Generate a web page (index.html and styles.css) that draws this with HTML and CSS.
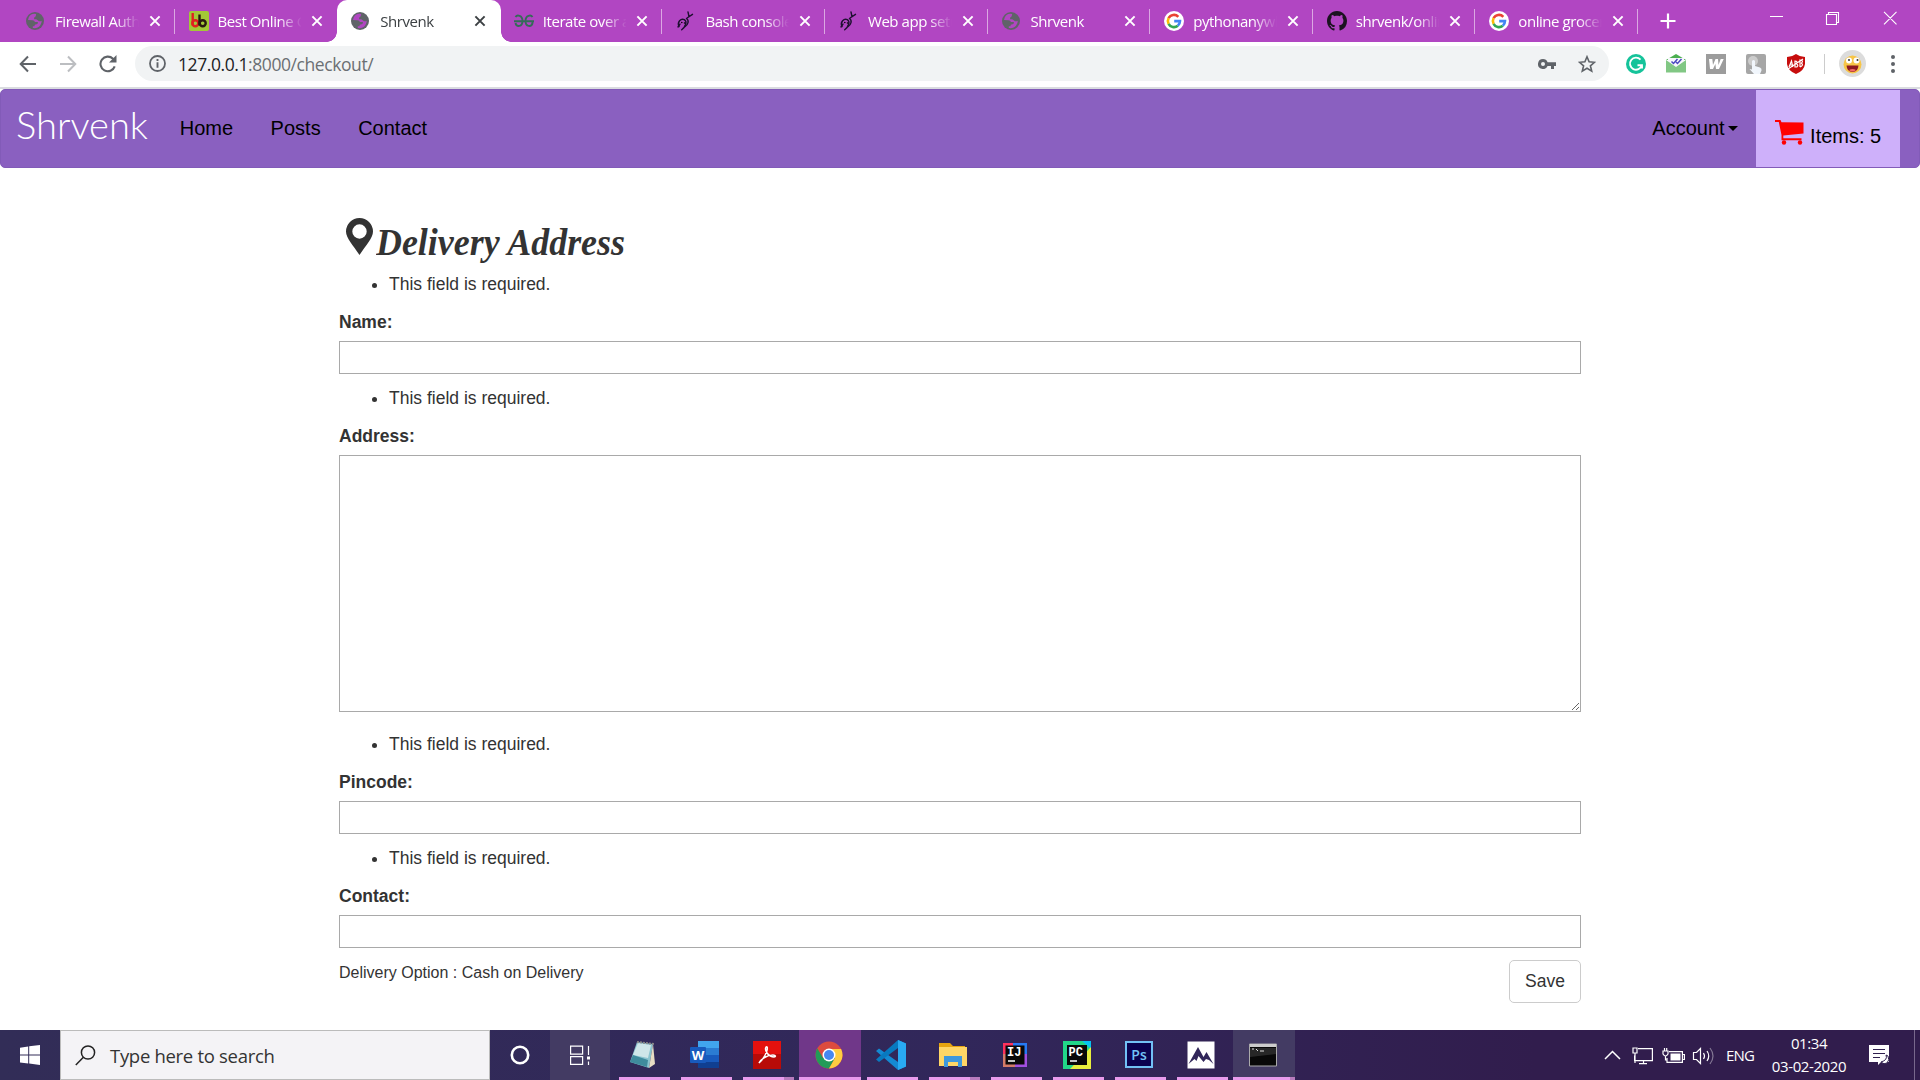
FILE: index.html
```html
<!DOCTYPE html>
<html lang="en">
<head>
<meta charset="utf-8">
<title>Shrvenk</title>
<link rel="stylesheet" href="styles.css">
</head>
<body>
<svg class="defs" width="0" height="0">
  <symbol id="globe" viewBox="0 0 18 18"><circle cx="9" cy="9" r="9" fill="#5f6368"/><path class="land" d="M8.5 1.8c-3 0-4.800 1.500-5.800 3.700l-.7 2.500 4.500.2c1.600.1 2 .8 2.300 1.800h3c.5 1.500-.5 2.200-2.300 2.400-.9.2-1 1-1 1.800l-1.700.1v1.800c3 .6 5.700-.5 7.300-2.600 1-1.400 1.600-3.100 1.500-4.700-1.200.9-2.500.7-3.600-.3-.9-1-2.100-1.400-3.800-1.200-.2-1.200-.2-2 1-2.500.8-.4.600-1.500 1-2.700z"/></symbol>
  <symbol id="google" viewBox="0 0 20 20"><circle cx="10" cy="10" r="10" fill="#fff"/><g fill="none" stroke-width="2.600"><path d="M4.600 7.200A6 6 0 0 1 14.300 5.800" stroke="#ea4335"/><path d="M4.600 7.200a6 6 0 0 0 0 5.600" stroke="#fbbc05"/><path d="M4.600 12.800a6 6 0 0 0 9.200 1.900" stroke="#34a853"/><path d="M10.200 10.100h5.800a6 6 0 0 1-2.200 4.600" stroke="#4285f4"/></g></symbol>
  <symbol id="snake" viewBox="0 0 20 20"><g fill="none" stroke="#1d1030" stroke-width="1.400" stroke-linecap="round"><path d="M3 15.500C.8 11 5 7 8.300 8.600c3.300 1.800 1.200 7.200-2.600 10.200"/><path d="M10.500 7.500c3 2 1.500 6.500-1.500 8M11 7l5.500-3.700M13 5.700 12 1M2 16l2-3"/></g><circle cx="5.800" cy="11.500" r=".8"/><circle cx="8.500" cy="12" r=".8"/></symbol>
  <symbol id="cross" viewBox="0 0 12 12"><path d="M1.400 1.400l9.200 9.200M10.600 1.400l-9.200 9.200" fill="none" stroke="currentColor" stroke-width="2"/></symbol>
</svg>

<header class="tabs">
  <div class="tab"><svg class="fav small"><use href="#globe"/></svg><span class="tab-title">Firewall Auth</span><svg class="close"><use href="#cross"/></svg></div>
  <div class="tab before-active"><svg class="fav" viewBox="0 0 20 20"><rect width="20" height="20" rx="2" fill="#a3c837"/><g fill="none" stroke-width="2.400"><path d="M3.700 2v12.500" stroke="#e02020"/><circle cx="6.300" cy="12.300" r="3" stroke="#e02020"/><path d="M10.500 3.500v11" stroke="#2a1a10"/><circle cx="13.700" cy="12.300" r="3" stroke="#2a1a10"/></g></svg><span class="tab-title">Best Online G</span><svg class="close"><use href="#cross"/></svg></div>
  <div class="tab active"><svg class="fav small"><use href="#globe"/></svg><span class="tab-title">Shrvenk</span><svg class="close"><use href="#cross"/></svg></div>
  <div class="tab"><svg class="fav" viewBox="0 0 20 20"><g fill="none" stroke="#356b58" stroke-width="1.900"><path d="M1.500 6C3 3.600 8.500 4 8.500 10S2.500 16.500 1.500 12M0 10.300h20M18.500 6c-1.500-2.400-7-2-7 4s6 6.500 7 2v-1.700"/></g></svg><span class="tab-title">Iterate over a</span><svg class="close"><use href="#cross"/></svg></div>
  <div class="tab"><svg class="fav"><use href="#snake"/></svg><span class="tab-title">Bash console</span><svg class="close"><use href="#cross"/></svg></div>
  <div class="tab"><svg class="fav"><use href="#snake"/></svg><span class="tab-title">Web app setup</span><svg class="close"><use href="#cross"/></svg></div>
  <div class="tab"><svg class="fav small"><use href="#globe"/></svg><span class="tab-title">Shrvenk</span><svg class="close"><use href="#cross"/></svg></div>
  <div class="tab"><svg class="fav"><use href="#google"/></svg><span class="tab-title">pythonanywh</span><svg class="close"><use href="#cross"/></svg></div>
  <div class="tab"><svg class="fav" viewBox="0 0 16 16"><path fill="#1b1320" d="M8 0C3.580 0 0 3.580 0 8c0 3.540 2.290 6.530 5.470 7.590.4.070.55-.17.55-.38 0-.19-.01-.82-.01-1.490-2.010.37-2.530-.49-2.690-.94-.09-.23-.48-.94-.82-1.130-.28-.15-.68-.52-.01-.53.63-.01 1.080.58 1.230.82.72 1.210 1.870.87 2.330.66.070-.52.28-.87.51-1.070-1.780-.2-3.640-.89-3.640-3.950 0-.87.31-1.590.82-2.150-.08-.2-.36-1.020.08-2.120 0 0 .67-.21 2.200.82.64-.18 1.320-.27 2-.27s1.360.09 2 .27c1.530-1.040 2.200-.82 2.200-.82.44 1.100.16 1.920.08 2.120.51.56.82 1.270.82 2.150 0 3.070-1.870 3.750-3.650 3.950.29.25.54.73.54 1.480 0 1.070-.01 1.930-.01 2.200 0 .21.15.46.55.38A8.010 8.010 0 0 0 16 8c0-4.420-3.580-8-8-8z"/></svg><span class="tab-title">shrvenk/onlin</span><svg class="close"><use href="#cross"/></svg></div>
  <div class="tab"><svg class="fav"><use href="#google"/></svg><span class="tab-title">online grocer</span><svg class="close"><use href="#cross"/></svg></div>
  <svg class="new-tab" viewBox="0 0 16 16"><path d="M8 .5v15M.5 8h15" stroke="#fff" stroke-width="2.200"/></svg>
  <svg class="window-buttons" viewBox="0 0 127 14"><g fill="none" stroke="#fff" stroke-width="1.100"><path d="M0 5.500h13M56.500 3.500h10v10h-10zM58.500 3.500v-2h10v10h-2M114 .8l12.500 12.500M126.500.8 114 13.300"/></g></svg>
</header>

<div class="toolbar">
  <svg class="nav-icon" viewBox="0 0 18 18"><path d="M17 9H2M9 1.500 1.700 9 9 16.500" fill="none" stroke="#5f6368" stroke-width="2"/></svg>
  <svg class="nav-icon" viewBox="0 0 18 18"><path d="M1 9h15M9 1.500 16.300 9 9 16.500" fill="none" stroke="#bcbec1" stroke-width="2"/></svg>
  <svg class="nav-icon" viewBox="0 0 18 18"><path d="M15.700 11.300A7.300 7.300 0 1 1 14 3.800l1.500 1.500" fill="none" stroke="#5f6368" stroke-width="2.100"/><path d="M17.500 0v7.500H10z" fill="#5f6368"/></svg>
  <div class="omnibox">
    <svg class="info" viewBox="0 0 17 17"><circle cx="8.500" cy="8.500" r="7.500" fill="none" stroke="#5f6368" stroke-width="1.800"/><path d="M8.500 4v1.900M8.500 7.300v5.500" stroke="#5f6368" stroke-width="1.900"/></svg>
    <span class="url"><b>127.0.0.1</b>:8000/checkout/</span>
    <svg class="key" viewBox="0 0 18 10"><path d="M5 0a5 5 0 1 0 4.600 7H13v3h3V7h2V3.200H9.600A5 5 0 0 0 5 0zm0 3a2 2 0 1 1 0 4 2 2 0 0 1 0-4z" fill="#5f6368" fill-rule="evenodd"/></svg>
    <svg class="star" viewBox="0 0 18 18"><path d="M9 1.800l2.100 5 5.400.5-4.100 3.500 1.300 5.300L9 13.300l-4.700 2.800 1.300-5.300L1.500 7.300l5.400-.5z" fill="none" stroke="#5f6368" stroke-width="1.600"/></svg>
  </div>
  <div class="extensions">
    <svg viewBox="0 0 20 20"><circle cx="10" cy="10" r="10" fill="#15c39a"/><path d="M14.500 5.700a6 6 0 1 0 1.300 5.500H11.500M16 14.500v-3.300" fill="none" stroke="#fff" stroke-width="1.900"/></svg>
    <svg viewBox="0 0 20 20"><path d="M0 6l10-6 10 6z" fill="#4caf50"/><path d="M2 4h16v12H2z" fill="#f7f7fc"/><path d="M0 6l10 7 10-7v12.500H0z" fill="#81c784"/><path d="M5.500 7.500l2 2 4-4.500M10 8l1.500 1.500L15.500 5" fill="none" stroke="#4a48c0" stroke-width="1.500"/></svg>
    <svg viewBox="0 0 20 20"><rect width="20" height="20" fill="#9c9c9c"/><path d="M3 5h3.300l.7 6 2.500-6h2.500l.5 6 2.200-6h3l-4.700 10H10l-.6-5-2.400 5H4z" fill="#fff"/></svg>
    <svg viewBox="0 0 20 20"><rect width="20" height="20" rx="2" fill="#a6a6a6"/><circle cx="7" cy="7" r="5" fill="#ccc"/><path d="M6 7q1.500-2 3 0v5l5 1.500q2 1 1.500 3L14 20H8l-4.500-5 2.500.5z" fill="#f1f6fc"/></svg>
    <svg viewBox="0 0 20 20"><path d="M10 0q4 3 9 3v7q-1 7-9 10Q2 17 1 10V3q5 0 9-3z" fill="#c70d0d"/><path d="M3 13l2.500-6 1.300 6M4 11h3M9 13V7q3 0 1.500 3 2.500 1 .3 3zM14 13V6q4 .5 1.500 3.200 2.500 2-1.500 3.800M2 15 17 5" stroke="#fff" stroke-width="1.200" fill="none"/></svg>
  </div>
  <svg class="avatar" viewBox="0 0 27 27"><circle cx="13.500" cy="13.500" r="13.500" fill="#dcdcdc"/><circle cx="13.500" cy="14.500" r="9" fill="#f7c548"/><circle cx="10" cy="10.500" r="3" fill="#fff"/><circle cx="17.500" cy="10.500" r="3" fill="#fff"/><circle cx="10" cy="10" r="1" fill="#333"/><circle cx="18.500" cy="10" r="1" fill="#333"/><path d="M7.500 15.500h12q-.5 6.500-6 6.500t-6-6.500z" fill="#8d1822"/><path d="M10 20q3.500-2 7 0-3.500 3-7 0z" fill="#f46b65"/></svg>
  <svg class="menu" viewBox="0 0 4 18"><g fill="#5f6368"><circle cx="2" cy="2" r="2"/><circle cx="2" cy="9" r="2"/><circle cx="2" cy="16" r="2"/></g></svg>
</div>

<nav class="navbar">
  <a class="brand"><svg width="136" height="50"><text x="0" y="35" textLength="132" lengthAdjust="spacingAndGlyphs">Shrvenk</text></svg></a>
  <a>Home</a><a>Posts</a><a>Contact</a>
  <a class="account">Account<i class="caret"></i></a>
  <a class="cart"><svg viewBox="0 0 29 25"><path d="M0 0h5.500l1 2.200L28.500 2.500v11L8.300 15.500v2.800H26.500v2H6.500V15L3.800 2H0z" fill="red"/><circle cx="9" cy="22.500" r="2.200" fill="red"/><circle cx="25" cy="22.500" r="2.200" fill="red"/></svg><span>Items: 5</span></a>
</nav>

<main class="page">
  <h1><svg class="pin" viewBox="0 0 27 37"><path d="M13.500 0A13.500 13.500 0 0 0 0 13.500C0 20 7 27 13.500 37 20 27 27 20 27 13.500A13.500 13.500 0 0 0 13.500 0zm0 6.300a7.200 7.200 0 1 1 0 14.400 7.200 7.200 0 0 1 0-14.400z" fill="#333" fill-rule="evenodd"/></svg><svg class="heading" width="252" height="52"><text x="0" y="37" textLength="249" lengthAdjust="spacingAndGlyphs">Delivery Address</text></svg></h1>
  <form>
    <ul><li>This field is required.</li></ul>
    <label for="name">Name:</label>
    <input id="name" type="text">
    <ul><li>This field is required.</li></ul>
    <label for="address">Address:</label>
    <textarea id="address"></textarea>
    <ul><li>This field is required.</li></ul>
    <label for="pincode">Pincode:</label>
    <input id="pincode" type="text">
    <ul><li>This field is required.</li></ul>
    <label for="contact">Contact:</label>
    <input id="contact" type="text">
    <div class="form-end"><span>Delivery Option : Cash on Delivery</span><button type="button">Save</button></div>
  </form>
</main>

<footer class="taskbar">
  <div class="start"><svg viewBox="0 0 20 20"><path d="M0 2.700l8.200-1.200v8H0zM9.200 1.300 20 0v9.500H9.200zM0 10.500h8.200v8L0 17.400zM9.200 10.500H20V20L9.200 18.600z" fill="#fff"/></svg></div>
  <div class="search"><svg viewBox="0 0 21 21"><circle cx="13" cy="7.500" r="6.600" fill="none" stroke="#222" stroke-width="1.500"/><path d="M8.400 12.300.8 20" stroke="#222" stroke-width="1.500"/></svg><span>Type here to search</span></div>
  <div class="shell"><svg viewBox="0 0 20 20"><circle cx="10" cy="10" r="8.200" fill="none" stroke="#fff" stroke-width="2.600"/></svg></div>
  <div class="shell lit"><svg viewBox="0 0 20 20"><g fill="none" stroke="#fff" stroke-width="1.200"><path d="M.6 1.100h12v8H.6zM.6 11.600h12v7.800H.6zM18.500 1v9M18.500 16.500V20"/></g><path d="M17 11.500h3v3h-3z" fill="#fff"/></svg></div>
  <div class="apps">
    <div class="app"><svg viewBox="0 0 30 30"><path d="M9 2l16 2-4 24L2 22z" fill="#8bc4cf"/><path d="M10 3l13 2-3 13L5 15z" fill="#cfe6e9"/><path d="M2 22l3-7 15 5-1 7z" fill="#3f8b9d"/><path d="M25 4l2 20-6 4z" fill="#e8ddc4"/><path d="M9 2l17 2" stroke="#888" stroke-width="2" stroke-dasharray="2 1"/></svg></div>
    <div class="app"><svg viewBox="0 0 30 30"><path d="M8 1h21v7H8z" fill="#41a5ee"/><path d="M8 8h21v7H8z" fill="#2b7cd3"/><path d="M8 15h21v7H8z" fill="#185abd"/><path d="M8 22h21v6H8z" fill="#103f91"/><rect x="0" y="7" width="16" height="16" rx="1" fill="#185abd"/><text x="8" y="19.500" class="word-letter">W</text></svg></div>
    <div class="app grouped"><svg viewBox="0 0 30 30"><rect x="1" y="1" width="28" height="28" fill="#b80b08"/><path d="M1 1h28v13H1z" fill="#e4110e"/><path d="M7 23c2-4 8-8 14-8 3 0 3 2 1 2-5 0-10-6-8-10 3-2 1 9-7 16z" fill="none" stroke="#fff" stroke-width="1.500"/></svg></div>
    <div class="app current"><svg viewBox="0 0 30 30"><circle cx="15" cy="15" r="13.500" fill="#dd4b3e"/><path d="M3.300 8.300A13.500 13.500 0 0 0 15 28.500L21 18l-12 0z" fill="#229b58"/><path d="M15 9h12.100A13.500 13.500 0 0 1 15 28.500L21 18z" fill="#ffcd40"/><circle cx="15" cy="15" r="6.500" fill="#fff"/><circle cx="15" cy="15" r="5" fill="#4688f1"/></svg></div>
    <div class="app"><svg viewBox="0 0 30 30"><path d="M22 0l8 3.500v23L22 30 0 11l3-2.500L22 22z" fill="#1489d2"/><path d="M22 0v8L3 22l-3-2.500z" fill="#0879bf"/><path d="M22 0l8 3.500v23L22 30z" fill="#29a9f2"/></svg></div>
    <div class="app grouped"><svg viewBox="0 0 30 30"><path d="M1 3h11l3 3h12v5H1z" fill="#e6a410"/><path d="M1 7h28v19H1z" fill="#ffd666"/><path d="M6 27V16h18v11h-4v-5H10v5z" fill="#3f98dc"/></svg></div>
    <div class="app"><svg viewBox="0 0 30 30"><path d="M3 3h12v12H3z" fill="#fe315d"/><path d="M13 3h14v12H13z" fill="#2779f4"/><path d="M3 14h14v13H3z" fill="#d37b68"/><path d="M15 14h12v13H15z" fill="#a14fe0"/><path d="M5.500 5.500h19v19h-19z" fill="#090909"/><text x="7" y="16" class="jet">IJ</text><path d="M8 21h7" stroke="#fff" stroke-width="1.500"/></svg></div>
    <div class="app"><svg viewBox="0 0 30 30"><path d="M1 1h28v28H1z" fill="#21d789"/><path d="M20 1h9v8z" fill="#07c3f2"/><path d="M29 7v22H8z" fill="#e8ee3d"/><path d="M5 5h20v20H5z" fill="#090909"/><text x="6.500" y="16" class="jet">PC</text><path d="M8 21h7" stroke="#fff" stroke-width="1.500"/></svg></div>
    <div class="app"><svg viewBox="0 0 30 30"><rect x="2" y="2" width="26" height="25" fill="#0c0350" stroke="#72c1f5" stroke-width="2"/><text x="15" y="20" class="ps">Ps</text></svg></div>
    <div class="app"><svg viewBox="0 0 30 30"><path d="M1.500 1.500h27v27h-27z" fill="#fff"/><path d="M2.500 24 12 7l5.500 10 3-5 7 12-4.500-4-3-1-2.500 3-5-6-2 5-2-2z" fill="#31265a"/></svg></div>
    <div class="app lit"><svg viewBox="0 0 30 30"><path d="M1.500 4h27v22h-27z" fill="#080808" stroke="#aaa"/><path d="M2 4h26v3H2z" fill="#ccc"/><path d="M4 9h2M8 9l2 2M12 11h4" stroke="#ddd"/><path d="M2 8h26v6L2 17z" fill="#fff" opacity=".13"/></svg></div>
  </div>
  <div class="tray">
    <svg class="tray-icons" viewBox="0 0 110 24"><g fill="none" stroke="#fff" stroke-width="1.200"><path d="M1 16l7.500-7.500L16 16" stroke-width="1.500"/><path d="M34 5.600h14.400v12H30.600v-5M39.500 18v2.500M35 20.600h8M29 5h4v5h-4zM31 10v10"/><path d="M65 8.600h13.400v10.800H63V15M79 11.500h1.400v5H79M59 8h5v3q-2.500 4-5 0zM60.500 5v3M62.700 5v3M61.500 13v4h2"/><path d="M89.500 9.500h3l4-4v15l-4-4h-3zM99.500 10q2 3 0 6M103 8q3.500 5 0 10"/><path d="M106 5q6 8 0 16" opacity=".4"/></g><path d="M66.500 10.500h10v7h-10z" fill="#fff"/></svg>
    <span class="lang">ENG</span>
    <div class="clock"><span class="time">01:34</span><span>03-02-2020</span></div>
    <svg class="notice" viewBox="0 0 20 20"><path d="M0 0h20v17h-8l-3 3v-3H0z" fill="#fff"/><path d="M4 4.500h12M4 8.500h12M4 12.500h7" stroke="#30204f" stroke-width="1.200"/><path d="M17 10q2 5-5 7 3 3 6 1 3-3 1-7z" fill="#fff" stroke="#30204f"/></svg>
  </div>
</footer>
</body>
</html>
```

FILE: styles.css
```css
* { box-sizing: border-box; }
body {
  margin: 0; width: 1920px; height: 1080px; overflow: hidden;
  display: flex; flex-direction: column;
  background: #fff; color: #333;
  font: 17.5px/25px "Liberation Sans", Arial, sans-serif;
}
svg { display: block; flex: none; }
.defs { position: absolute; }

/* Browser tabs */
.tabs {
  height: 42px; flex: none; display: flex; align-items: center;
  padding: 0 23px 0 12px; background: #b146c2; color: #fff;
  font: 15px/20px "Open Sans", "Noto Sans", sans-serif;
}
.tab {
  width: 162.6px; height: 42px; flex: none; padding: 0 14px;
  display: flex; align-items: center; position: relative;
}
.tab::after {
  content: ""; position: absolute; right: 0; top: 9px;
  width: 1px; height: 25px; background: #dba8e2;
}
.before-active::after { display: none; }
.active { background: #fff; color: #3c4043; border-radius: 10px 10px 0 0; width: 164px; margin-right: -1.4px; z-index: 1; }
.active::before, .active::after {
  content: ""; position: absolute; top: auto; bottom: 0; width: 10px; height: 10px;
}
.active::before { left: -10px; background: radial-gradient(circle at 0 0, transparent 9.500px, #fff 10px); }
.active::after { right: -10px; background: radial-gradient(circle at 100% 0, transparent 9.500px, #fff 10px); }
.fav { width: 20px; height: 20px; margin-right: 9px; }
.fav.small { width: 18px; height: 18px; margin: 0 11px 0 0; }
.land { fill: #b146c2; }
.tab-title {
  width: 84px; overflow: hidden; white-space: nowrap; letter-spacing: -.45px;
  mask-image: linear-gradient(90deg, #000 60px, transparent 84px);
}
.active .land { fill: #fff; }
.close { width: 12px; height: 12px; margin-left: 10px; }
.new-tab { width: 16px; height: 16px; margin-left: 22px; }
.window-buttons { width: 127px; height: 14px; margin: -6px 0 0 auto; }

/* Address bar */
.toolbar {
  height: 47px; flex: none; display: flex; align-items: center;
  padding: 0 25px 2px 19px; border-bottom: 2px solid #dadce0; background: #fff;
}
.nav-icon { width: 18px; height: 18px; margin-right: 22px; }
.omnibox {
  width: 1474px; height: 35px; margin-left: -4px; padding: 0 13px 0 14px;
  display: flex; align-items: center; border-radius: 18px; background: #f1f3f4;
}
.info { width: 17px; height: 17px; }
.url { flex: 1; margin-left: 12px; color: #6b6f73; font: 17.5px/24px "Open Sans", sans-serif; letter-spacing: -.42px; }
.url b { color: #202124; font-weight: 400; }
.key { width: 18px; height: 10px; margin-right: 22px; }
.star { width: 18px; height: 18px; }
.extensions { display: flex; gap: 20px; margin-left: 17px; padding-right: 18px; border-right: 1px solid #ccc; }
.extensions svg { width: 20px; height: 20px; }
.avatar { width: 27px; height: 27px; margin-left: 14px; }
.menu { width: 4px; height: 18px; margin-left: auto; }

/* Site navigation */
.navbar {
  height: 79px; flex: none; display: flex; align-items: center;
  padding: 0 19px 0 15px; border: 1px solid #825bb8; border-radius: 5px;
  background: #8a60c0; color: #000; font-size: 20px;
}
.navbar a { padding: 0 18.750px; }
.navbar .brand { width: 145px; padding: 0; }
.brand text { font: 300 37px Lato, sans-serif; fill: #fff; }
.account { margin-left: auto; display: flex; align-items: center; }
.caret { border: 5px solid transparent; border-top-color: #000; border-bottom: 0; margin-left: 3px; }
.navbar .cart { height: 77px; display: flex; align-items: center; background: #ceb0fa; padding: 8px 18.750px 0; }
.cart svg { width: 29px; height: 25px; margin-right: 6px; }
.cart span { margin-top: 8px; }

/* Checkout form */
.page { flex: 1; width: 1242px; margin: 0 auto; padding-top: 50px; }
h1 { height: 54px; margin: 0; padding-left: 7px; display: flex; }
.pin { width: 27px; height: 37px; margin-right: 3px; }
.heading text { font: italic 700 38px "Liberation Serif", serif; fill: #333; }
form { display: flex; flex-direction: column; }
ul { margin: 0 0 12.500px; padding-left: 50px; height: 25px; }
label { height: 25px; margin-bottom: 6.500px; font-weight: 700; }
input, textarea { margin: 0 0 12px; border: 1px solid #a9a9a9; background: #fff; padding: 2px; }
input { height: 33px; }
textarea { height: 257px; margin-bottom: 20px; resize: vertical; }
.form-end { display: flex; justify-content: space-between; font-size: 16px; }
button {
  width: 72px; height: 43px; border: 1px solid #ccc; border-radius: 5px;
  background: #fff; color: #333; font: 17.5px "Liberation Sans", sans-serif;
}

/* Desktop taskbar */
.taskbar {
  height: 50px; flex: none; display: flex;
  background: linear-gradient(90deg, #322d57, #31275a 50%, #311d4d 80%);
  color: #fff; font-family: "Open Sans", "Noto Sans", sans-serif;
}
.start, .shell { width: 60px; display: flex; align-items: center; justify-content: center; }
.start svg, .shell svg { width: 20px; height: 20px; }
.search {
  width: 430px; padding: 0 14px; display: flex; align-items: center; gap: 14px;
  border: 1px solid #bbb; background: #f4f3f6; color: #333; font-size: 18.500px; letter-spacing: -.3px;
}
.search svg { width: 21px; height: 21px; }
.lit { background: #433b63; }
.apps { display: flex; margin-left: 3px; }
.app { width: 62px; height: 50px; padding: 10px 16px 0; border-bottom: 3px solid transparent; border-image: linear-gradient(90deg, transparent 6px, #e89bec 6px, #e89bec 57px, transparent 57px) 0 0 3; }
.app svg { width: 30px; height: 30px; margin-left: -1px; }
.grouped { border-image-source: linear-gradient(90deg, transparent 6px, #e89bec 6px, #e89bec 47px, #b77bbd 47px, #b77bbd 57px, transparent 57px); }
.current { background: #703789; border-image-source: linear-gradient(#e89bec, #e89bec); }
.app.lit { border-image-source: linear-gradient(90deg, #e89bec 57px, #b77bbd 57px); }
.word-letter { font: 700 13px "Open Sans", sans-serif; fill: #fff; text-anchor: middle; }
.jet { font: 700 12px "Liberation Mono", monospace; fill: #fff; }
.ps { font: 600 14px "Open Sans", sans-serif; fill: #72c1f5; text-anchor: middle; }
.tray { display: flex; align-items: center; margin-left: auto; margin-right: 5px; padding-right: 25px; border-right: 1px solid #78688c; font-size: 15px; letter-spacing: -.4px; }
.tray-icons { width: 110px; height: 24px; }
.lang { margin-left: 12px; width: 44px; letter-spacing: -.8px; }
.clock { width: 78px; margin-right: 21px; display: flex; flex-direction: column; align-items: center; line-height: 23px; }
.notice { width: 20px; height: 20px; }
```
